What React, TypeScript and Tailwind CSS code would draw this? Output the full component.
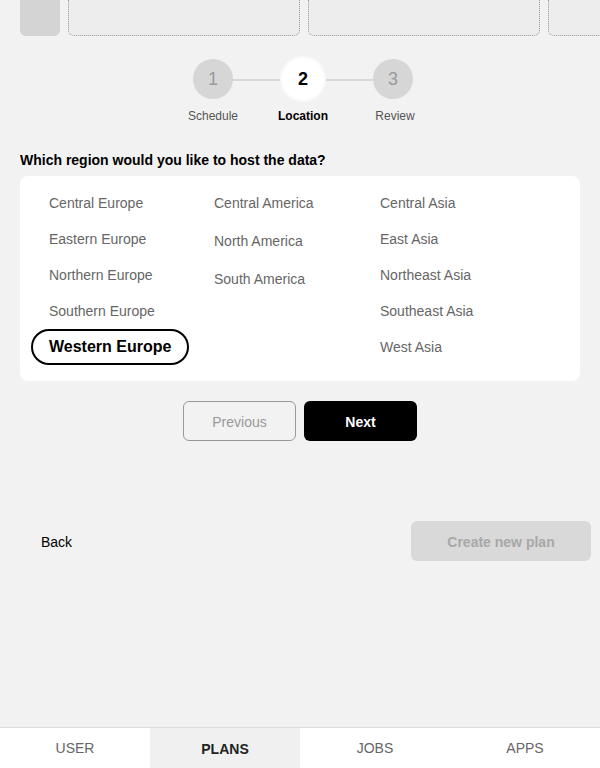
import React from 'react';

const columns: { name: string; h: string }[][] = [
    [
        { name: 'Central Europe', h: 'h-[36px]' },
        { name: 'Eastern Europe', h: 'h-[36px]' },
        { name: 'Northern Europe', h: 'h-[36px]' },
        { name: 'Southern Europe', h: 'h-[36px]' },
        { name: 'Western Europe', h: 'h-[36px]' },
    ],
    [
        { name: 'Central America', h: 'h-[36px]' },
        { name: 'North America', h: 'h-[40px]' },
        { name: 'South America', h: 'h-[36px]' },
    ],
    [
        { name: 'Central Asia', h: 'h-[36px]' },
        { name: 'East Asia', h: 'h-[36px]' },
        { name: 'Northeast Asia', h: 'h-[36px]' },
        { name: 'Southeast Asia', h: 'h-[36px]' },
        { name: 'West Asia', h: 'h-[36px]' },
    ],
];

const selected = 'Western Europe';

const Stepper: React.FC = () => {
    const steps = ['Schedule', 'Location', 'Review'];
    return (
        <div className="flex justify-center pl-[6px]">
            <div className="relative flex">
                <div className="absolute left-[45px] right-[45px] top-[23px] h-[2px] bg-[#d8d8d8]" />
                {steps.map((label, i) => {
                    const active = i === 1;
                    return (
                        <div key={label} className="relative flex w-[90px] flex-col items-center">
                            <div className="flex h-[46px] items-center">
                                {active ? (
                                    <div className="flex h-[46px] w-[46px] items-center justify-center rounded-full border-2 border-[#fafafa] bg-white text-[18px] font-bold text-black">
                                        {i + 1}
                                    </div>
                                ) : (
                                    <div className="flex h-[40px] w-[40px] items-center justify-center rounded-full bg-[#d6d6d6] text-[18px] text-[#9a9a9a]">
                                        {i + 1}
                                    </div>
                                )}
                            </div>
                            <span
                                className={
                                    active
                                        ? 'mt-[6px] text-xs font-bold text-black'
                                        : i === 2
                                          ? 'mt-[6px] pl-[4px] text-xs text-[#555]'
                                          : 'mt-[6px] text-xs text-[#555]'
                                }
                            >
                                {label}
                            </span>
                        </div>
                    );
                })}
            </div>
        </div>
    );
};

export default function App() {
    return (
        <div
            className="flex h-screen flex-col overflow-hidden bg-[#f2f2f2]"
            style={{ fontFamily: '"Liberation Sans", Arial, sans-serif' }}
        >
            {/* cut-off carousel */}
            <div className="flex h-[36px] shrink-0 gap-2 overflow-hidden pl-5">
                <div className="h-[36px] w-[40px] shrink-0 rounded-b-md bg-[#d4d4d4]" />
                <div className="h-[36px] w-[232px] shrink-0 rounded-b-md border border-t-0 border-dotted border-[#999] bg-[#ededed]" />
                <div className="h-[36px] w-[232px] shrink-0 rounded-b-md border border-t-0 border-dotted border-[#999] bg-[#ededed]" />
                <div className="h-[36px] w-[232px] shrink-0 rounded-b-md border border-t-0 border-dotted border-[#999] bg-[#ededed]" />
            </div>

            <div className="mt-[20px]">
                <Stepper />
            </div>

            <p className="mt-[26px] px-5 text-sm font-bold text-black">Which region would you like to host the data?</p>

            <div className="mx-5 mt-[6px] rounded-lg bg-white pb-[16px] pl-[11px] pt-[9px]">
                <div className="grid grid-cols-[165px_166px_1fr]">
                    {columns.map((col, ci) => (
                        <div key={ci} className="flex flex-col items-start">
                            {col.map((r) =>
                                r.name === selected ? (
                                    <div
                                        key={r.name}
                                        className="flex h-[36px] items-center rounded-full border-2 border-black px-4 text-base font-bold text-black"
                                    >
                                        {r.name}
                                    </div>
                                ) : (
                                    <div
                                        key={r.name}
                                        className={`flex ${r.h} items-center border-2 border-transparent px-4 text-sm text-[#666]`}
                                    >
                                        {r.name}
                                    </div>
                                )
                            )}
                        </div>
                    ))}
                </div>
            </div>

            <div className="mt-5 flex justify-center gap-2">
                <button className="h-[40px] w-[113px] rounded-md border border-[#999] pt-[2px] text-sm text-[#999]">Previous</button>
                <button className="h-[40px] w-[113px] rounded-md bg-black pt-[2px] text-sm font-bold text-white">Next</button>
            </div>

            <div className="mt-[80px] flex items-center justify-between pl-5 pr-[9px]">
                <button className="h-[40px] px-[21px] pt-[2px] text-sm text-black">Back</button>
                <button className="h-[40px] w-[180px] rounded-md bg-[#d9d9d9] pt-[2px] text-sm font-bold text-[#a8a8a8]">
                    Create new plan
                </button>
            </div>

            <nav className="mt-auto grid h-[41px] shrink-0 grid-cols-4 border-t border-[#ddd] bg-white">
                <button className="text-sm text-[#666]">USER</button>
                <button className="bg-[#f0f0f0] pt-[2px] text-sm font-bold text-[#222]">PLANS</button>
                <button className="text-sm text-[#666]">JOBS</button>
                <button className="text-sm text-[#666]">APPS</button>
            </nav>
        </div>
    );
}
